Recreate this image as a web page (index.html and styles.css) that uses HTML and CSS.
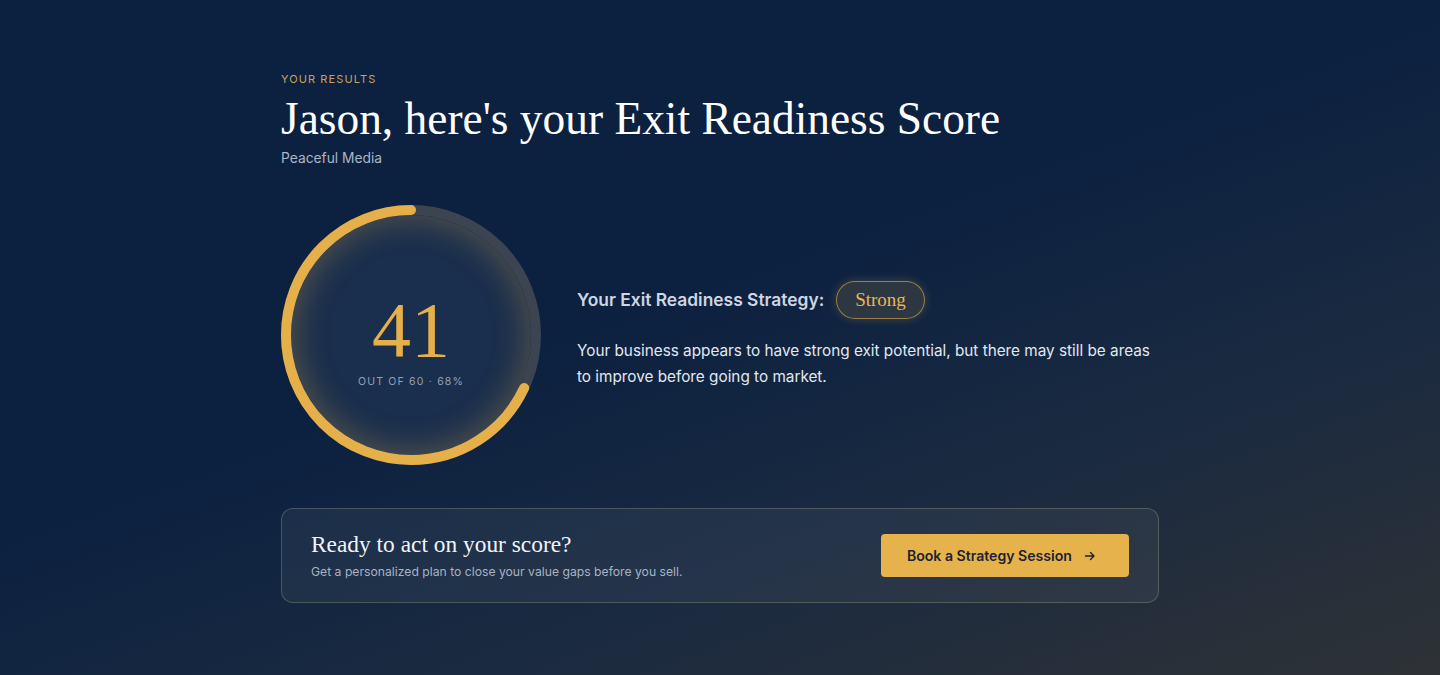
FILE: index.html
```html
<!DOCTYPE html>
<html lang="en">
<head>
<meta charset="utf-8">
<title>Exit Readiness Score</title>
<link rel="stylesheet" href="styles.css">
</head>
<body>
<main class="page">
  <div class="container">
    <p class="eyebrow">YOUR RESULTS</p>
    <h1 class="title">Jason, here's your Exit Readiness Score</h1>
    <p class="company">Peaceful Media</p>

    <section class="score-row">
      <div class="ring">
        <div class="ring-inner"></div>
        <svg class="ring-svg" width="260" height="260" viewBox="0 0 260 260">
          <circle class="track" cx="130" cy="130" r="125"></circle>
          <circle class="progress" cx="130" cy="130" r="125" stroke-dasharray="534.1 785.4"></circle>
        </svg>
        <div class="ring-text">
          <div class="score">41</div>
          <div class="score-sub">OUT OF 60 · 68%</div>
        </div>
      </div>
      <div class="strategy">
        <div class="strategy-head">
          <span class="strategy-label">Your Exit Readiness Strategy:</span>
          <span class="badge">Strong</span>
        </div>
        <p class="strategy-text">Your business appears to have strong exit potential, but there may still be areas to improve before going to market.</p>
      </div>
    </section>

    <section class="cta">
      <div class="cta-copy">
        <h2 class="cta-title">Ready to act on your score?</h2>
        <p class="cta-text">Get a personalized plan to close your value gaps before you sell.</p>
      </div>
      <button class="cta-btn" type="button">Book a Strategy Session
        <svg class="arrow" width="12" height="12" viewBox="0 0 12 12"><path d="M1.5 6h8.5M6.5 2.5 10 6 6.5 9.5" fill="none" stroke="currentColor" stroke-width="1.4" stroke-linecap="round" stroke-linejoin="round"/></svg>
      </button>
    </section>
  </div>
</main>
</body>
</html>
```
FILE: styles.css
```css
* { box-sizing: border-box; }
html, body { margin: 0; padding: 0; }
body {
  font-family: Inter, "Noto Sans", sans-serif;
  color: #e2e8f0;
  background: #0c2140;
}
.page {
  min-height: 675px;
  background: linear-gradient(160deg, #0c2140 0%, #0c2140 45%, #1a2a40 70%, #2e3236 100%);
  padding-top: 72px;
}
.container {
  width: 878px;
  margin: 0 auto;
}
.eyebrow {
  margin: 0;
  font-size: 11px;
  letter-spacing: 1.1px;
  color: #c7a35e;
  line-height: 14px;
}
.title {
  margin: 7px 0 0;
  font-family: "Liberation Serif", "Times New Roman", serif;
  font-weight: 400;
  font-size: 45.4px;
  line-height: 52px;
  color: #ffffff;
}
.company {
  margin: 3px 0 0;
  font-size: 13.8px;
  color: #aab5c6;
  line-height: 20px;
}
.score-row {
  display: flex;
  align-items: center;
  gap: 36px;
  margin-top: 37px;
}
.ring {
  position: relative;
  width: 260px;
  height: 260px;
  flex: none;
}
.ring-inner {
  position: absolute;
  left: 10px; top: 10px; right: 10px; bottom: 10px;
  border-radius: 50%;
  background: #1a2e4d;
  box-shadow: inset 0 0 30px 6px rgba(229, 176, 74, 0.26);
}
.ring-svg {
  position: absolute;
  left: 0; top: 0;
  transform: rotate(-90deg) scaleY(-1);
}
.track {
  fill: none;
  stroke: #3c4451;
  stroke-width: 10;
}
.progress {
  fill: none;
  stroke: #e5b04a;
  stroke-width: 10;
  stroke-linecap: round;
}
.ring-text {
  position: absolute;
  inset: 0;
  display: flex;
  flex-direction: column;
  align-items: center;
  justify-content: center;
  padding-top: 14px;
}
.score {
  font-family: "Liberation Serif", "Times New Roman", serif;
  font-size: 78px;
  line-height: 66px;
  color: #e5b04a;
  margin-top: 2px;
}
.score-sub {
  font-size: 10.5px;
  letter-spacing: 1.2px;
  color: #93a0b4;
  margin-top: 12px;
  line-height: 14px;
}
.strategy { flex: 1; }
.strategy-head {
  display: flex;
  align-items: center;
  gap: 12px;
}
.strategy-label {
  font-size: 17.4px;
  font-weight: 600;
  color: #cdd6e2;
}
.badge {
  font-family: "Liberation Serif", "Times New Roman", serif;
  font-size: 19px;
  color: #e8b653;
  padding: 7px 18px;
  border-radius: 999px;
  border: 1.5px solid rgba(229, 176, 74, 0.6);
  background: rgba(229, 176, 74, 0.14);
  box-shadow: 0 0 10px rgba(229, 176, 74, 0.25);
  line-height: 22px;
}
.strategy-text {
  margin: 19px 0 0;
  font-size: 15.3px;
  line-height: 26px;
  color: #e2e8f0;
  max-width: 582px;
}
.cta {
  margin-top: 43px;
  display: flex;
  align-items: center;
  justify-content: space-between;
  padding: 0 29px;
  border-radius: 12px;
  border: 1px solid rgba(170, 170, 140, 0.32);
  background: rgba(255, 255, 255, 0.05);
  height: 95px;
}
.cta-title {
  margin: 0;
  font-family: "Liberation Serif", "Times New Roman", serif;
  font-weight: 400;
  font-size: 23.4px;
  line-height: 28px;
  color: #f1f4f8;
}
.cta-text {
  margin: 5px 0 0;
  font-size: 12.2px;
  color: #a8b3c3;
  line-height: 18px;
}
.cta-btn {
  display: flex;
  align-items: center;
  gap: 12px;
  height: 43px;
  padding: 0 33px 0 26px;
  border: none;
  border-radius: 4px;
  background: #e6b24c;
  color: #1c2230;
  font-family: Inter, "Noto Sans", sans-serif;
  font-size: 14.1px;
  font-weight: 600;
}
.arrow { display: block; }
```
